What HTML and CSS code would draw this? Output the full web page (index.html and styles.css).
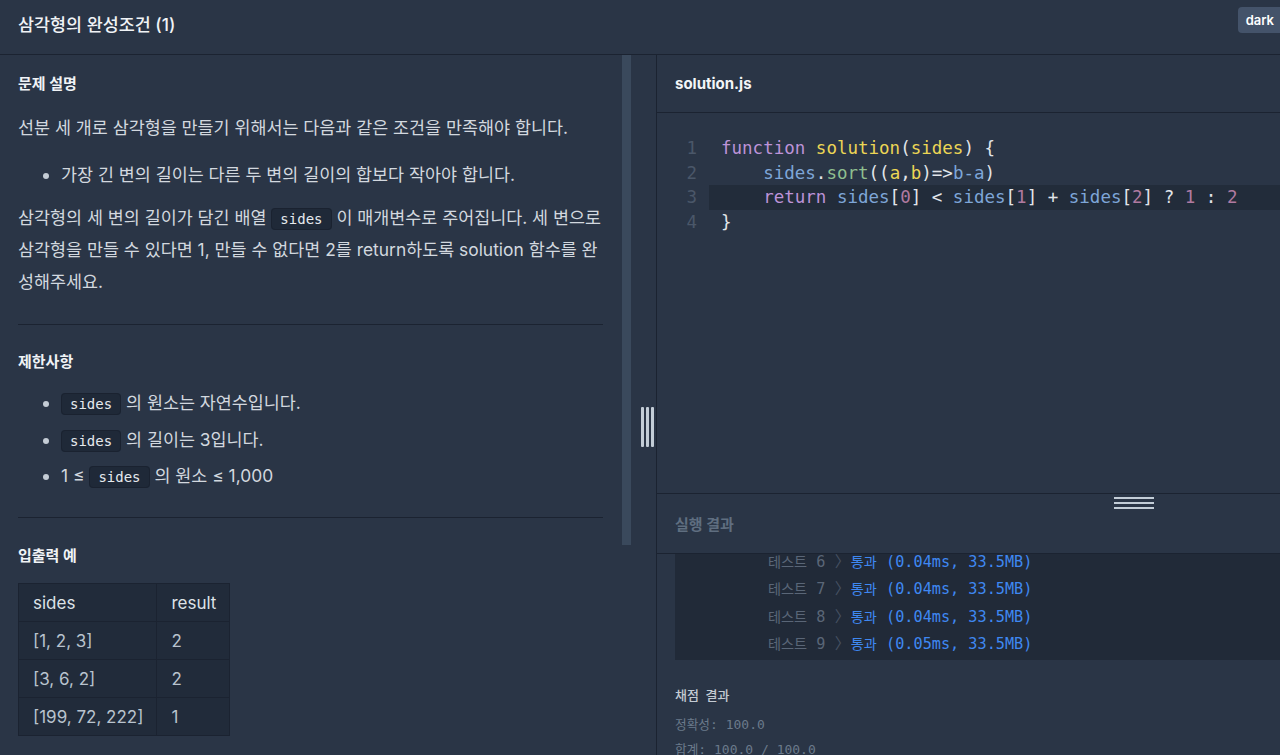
FILE: index.html
```html
<!DOCTYPE html>
<html lang="ko">
<head>
<meta charset="utf-8">
<title>삼각형의 완성조건 (1)</title>
<link rel="stylesheet" href="styles.css">
</head>
<body>
<div class="app">
  <header class="topbar">
    <h1 class="title">삼각형의 완성조건 (1)</h1>
    <button class="theme-btn">dark</button>
  </header>
  <div class="main">
    <section class="problem">
      <h5 class="sec-title first">문제 설명</h5>
      <p class="para p1">선분 세 개로 삼각형을 만들기 위해서는 다음과 같은 조건을 만족해야 합니다.</p>
      <ul class="list list1">
        <li>가장 긴 변의 길이는 다른 두 변의 길이의 합보다 작아야 합니다.</li>
      </ul>
      <p class="para p2">삼각형의 세 변의 길이가 담긴 배열 <code>sides</code> 이 매개변수로 주어집니다. 세 변으로 삼각형을 만들 수 있다면 1, 만들 수 없다면 2를 return하도록 solution 함수를 완성해주세요.</p>
      <hr class="rule">
      <h5 class="sec-title">제한사항</h5>
      <ul class="list list2">
        <li><code>sides</code> 의 원소는 자연수입니다.</li>
        <li><code>sides</code> 의 길이는 3입니다.</li>
        <li>1 ≤ <code>sides</code> 의 원소 ≤ 1,000</li>
      </ul>
      <hr class="rule rule2">
      <h5 class="sec-title">입출력 예</h5>
      <table class="io">
        <thead>
          <tr><th>sides</th><th>result</th></tr>
        </thead>
        <tbody>
          <tr><td>[1, 2, 3]</td><td>2</td></tr>
          <tr><td>[3, 6, 2]</td><td>2</td></tr>
          <tr><td>[199, 72, 222]</td><td>1</td></tr>
        </tbody>
      </table>
    </section>
    <div class="scrollbar"><div class="thumb"></div></div>
    <div class="splitter"><span></span><span></span><span></span></div>
    <section class="workspace">
      <div class="file-tab">solution.js</div>
      <div class="editor">
        <div class="line"><span class="ln">1</span><span class="src"><span class="kw">function</span> <span class="fn">solution</span><span class="pu">(</span><span class="fn">sides</span><span class="pu">) {</span></span></div>
        <div class="line"><span class="ln">2</span><span class="src">    <span class="var">sides</span><span class="pu">.</span><span class="prop">sort</span><span class="pu">((</span><span class="fn">a</span><span class="pu">,</span><span class="fn">b</span><span class="pu">)=&gt;</span><span class="var">b-a</span><span class="pu">)</span></span></div>
        <div class="line active"><span class="ln">3</span><span class="src">    <span class="kw">return</span> <span class="var">sides</span><span class="pu">[</span><span class="num">0</span><span class="pu">] &lt; </span><span class="var">sides</span><span class="pu">[</span><span class="num">1</span><span class="pu">] + </span><span class="var">sides</span><span class="pu">[</span><span class="num">2</span><span class="pu">] ? </span><span class="num">1</span><span class="pu"> : </span><span class="num">2</span></span></div>
        <div class="line"><span class="ln">4</span><span class="src"><span class="pu">}</span></span></div>
      </div>
      <div class="results-head">
        <div class="hsplit"><span></span><span></span><span></span></div>
        <span class="results-title">실행 결과</span>
      </div>
      <div class="console">
        <div class="console-box">
          <div class="console-lines">
            <div class="cl"><span class="t-label"><span class="ko">테스트</span> 6</span> <span class="t-sep">〉</span><span class="t-pass"><span class="ko">통과</span> (0.04ms, 33.5MB)</span></div>
            <div class="cl"><span class="t-label"><span class="ko">테스트</span> 7</span> <span class="t-sep">〉</span><span class="t-pass"><span class="ko">통과</span> (0.04ms, 33.5MB)</span></div>
            <div class="cl"><span class="t-label"><span class="ko">테스트</span> 8</span> <span class="t-sep">〉</span><span class="t-pass"><span class="ko">통과</span> (0.04ms, 33.5MB)</span></div>
            <div class="cl"><span class="t-label"><span class="ko">테스트</span> 9</span> <span class="t-sep">〉</span><span class="t-pass"><span class="ko">통과</span> (0.05ms, 33.5MB)</span></div>
          </div>
        </div>
      </div>
      <div class="grade">
        <div class="grade-title">채점 결과</div>
        <div class="grade-row"><span class="ko-s">정확성</span>: 100.0</div>
        <div class="grade-row"><span class="ko-s">합계</span>: 100.0 / 100.0</div>
      </div>
    </section>
  </div>
</div>
</body>
</html>
```

FILE: styles.css
```css
* { box-sizing: border-box; }

html, body {
  margin: 0;
  height: 755px;
  overflow: hidden;
}

body {
  background: #2a3546;
  font-family: Inter, "Noto Sans CJK KR", sans-serif;
  color: #d2d8df;
}

.app {
  height: 755px;
  display: flex;
  flex-direction: column;
}

.topbar {
  height: 55px;
  flex-shrink: 0;
  border-bottom: 1px solid #1b2331;
  display: flex;
  justify-content: space-between;
  align-items: flex-start;
  padding-left: 18px;
}

.title {
  margin: 0;
  font-size: 17.4px;
  font-weight: 500;
  line-height: 50px;
  color: #f0f3f6;
}

.theme-btn {
  margin-top: 7px;
  height: 26px;
  padding: 0 6px 0 8px;
  border: 0;
  border-radius: 4px 0 0 4px;
  background: #44536a;
  color: #ffffff;
  font-family: Inter, sans-serif;
  font-size: 13px;
  font-weight: 600;
}

.main {
  flex: 1;
  display: flex;
  min-height: 0;
}

/* left problem panel */
.problem {
  width: 622px;
  flex-shrink: 0;
  overflow: hidden;
  padding: 0 19px 0 18px;
}

.sec-title {
  margin: 26px 0 0;
  font-size: 15px;
  font-weight: 700;
  line-height: 22px;
  color: #f0f3f6;
}
.sec-title.first { margin-top: 18px; }

.para {
  margin: 0;
  font-size: 17.4px;
  line-height: 32px;
}
.p1 { margin-top: 17px; }
.p2 { margin-top: 11px; }

.list {
  margin: 0;
  padding-left: 43px;
  font-size: 17.4px;
}
.list li::marker { color: #c4ccd5; }
.list1 { margin-top: 15px; }
.list1 li { line-height: 32px; }
.list2 { margin-top: 12px; }
.list2 li { line-height: 36.5px; }

code {
  font-family: "DejaVu Sans Mono", monospace;
  font-size: 14px;
  line-height: 20px;
  padding: 2px 8px;
  border-radius: 4px;
  background: #1f2938;
  border: 1px solid #1a2230;
  color: #e6eaee;
}

.rule {
  margin: 26px 0 0;
  border: 0;
  border-top: 1px solid #1b2331;
  height: 0;
}
.rule2 { margin-top: 22.5px; }
.rule2 + .sec-title { margin-top: 27px; }

.io {
  margin-top: 16px;
  border-collapse: collapse;
  background: #212b3a;
  font-size: 17px;
}
.io th, .io td {
  border: 1px solid #1b2331;
  height: 38px;
  padding: 0 13px 0 14px;
  text-align: left;
  font-weight: 400;
}
.io th { color: #dde2e7; }
.io td { color: #b9c3ce; }

/* scrollbar + splitter */
.scrollbar { width: 9px; flex-shrink: 0; }
.thumb { height: 490px; background: #3a495c; }

.splitter {
  width: 26px;
  flex-shrink: 0;
  border-right: 1px solid #1b2331;
  display: flex;
  align-items: flex-start;
  gap: 2px;
  padding: 352px 0 0 10px;
}
.splitter span {
  width: 3px;
  height: 40px;
  background: #c3cdd7;
  border-radius: 1px;
}

/* right workspace */
.workspace {
  flex: 1;
  min-width: 0;
  display: flex;
  flex-direction: column;
}

.file-tab {
  height: 58px;
  flex-shrink: 0;
  border-bottom: 1px solid #1b2331;
  padding-left: 18px;
  display: flex;
  align-items: center;
  font-size: 15px;
  font-weight: 700;
  color: #f3f5f7;
}

.editor {
  height: 381px;
  flex-shrink: 0;
  border-bottom: 1px solid #1b2331;
  padding-top: 23px;
  font-family: "DejaVu Sans Mono", monospace;
  font-size: 17.5px;
  line-height: 24.5px;
}
.line { display: flex; }
.ln {
  width: 52px;
  flex-shrink: 0;
  padding-right: 12px;
  text-align: right;
  color: #4a5769;
}
.src {
  flex: 1;
  padding-left: 12px;
  white-space: pre;
  color: #e1e5ea;
}
.line.active .src { background: #222c3a; }
.kw { color: #bd93d8; }
.fn { color: #ecd655; }
.var { color: #7ea6d8; }
.prop { color: #8fbf8f; }
.num { color: #b07aa0; }
.pu { color: #e1e5ea; }

.results-head {
  position: relative;
  height: 60px;
  flex-shrink: 0;
  border-bottom: 1px solid #1b2331;
  padding-left: 18px;
  display: flex;
  align-items: center;
}
.hsplit {
  position: absolute;
  left: 457px;
  top: 3px;
  width: 40px;
  display: flex;
  flex-direction: column;
  gap: 3px;
}
.hsplit span {
  height: 2px;
  background: #c3cdd7;
}
.results-title {
  font-size: 15px;
  font-weight: 700;
  color: #5f6e80;
}

.console {
  padding-left: 18px;
  flex-shrink: 0;
}
.console-box {
  height: 106px;
  background: #212a38;
  overflow: hidden;
  padding-left: 93px;
}
.console-lines {
  margin-top: -5px;
  font-family: "DejaVu Sans Mono", "Noto Sans CJK KR", monospace;
  font-size: 15.2px;
  line-height: 27px;
}
.cl {
  height: 27.3px;
  white-space: pre;
}
.ko {
  font-family: "Noto Sans CJK KR", sans-serif;
  font-size: 14.2px;
  line-height: 1;
}
.t-label { color: #5a6677; }
.t-sep { color: #465162; margin-right: 1px; }
.t-pass { color: #3f88f2; }

.grade {
  padding: 25px 18px 0;
  font-family: "DejaVu Sans Mono", "Noto Sans CJK KR", monospace;
  font-size: 13px;
}
.grade-title {
  font-family: "Noto Sans CJK KR", sans-serif;
  font-size: 13px;
  line-height: 20px;
  color: #c3cbd3;
  font-weight: 500;
  word-spacing: 3px;
}
.ko-s {
  font-family: "Noto Sans CJK KR", sans-serif;
  font-size: 12.7px;
  line-height: 1;
}
.grade-row {
  line-height: 25px;
  color: #6a7a8b;
}
.grade-title + .grade-row { margin-top: 6.5px; }
```
